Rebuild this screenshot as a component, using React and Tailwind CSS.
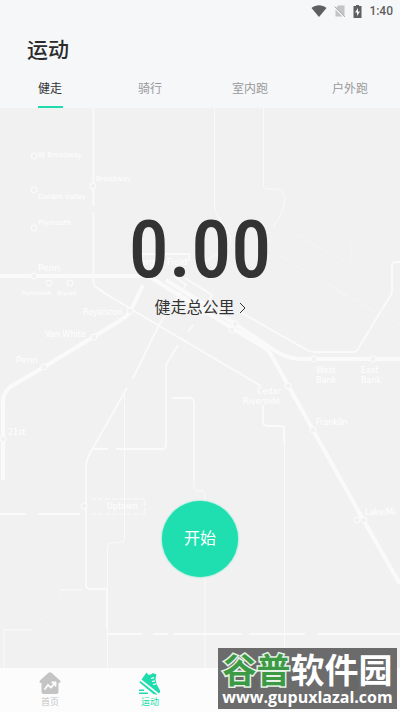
import { useState } from 'react'

const TABS = ['健走', '骑行', '室内跑', '户外跑']

export default function App() {
  const [tab, setTab] = useState(0)

  return (
    <div className="relative min-h-screen flex flex-col bg-[#f1f1f1] text-[#333333] font-['Roboto','Noto_Sans_CJK_SC',sans-serif]">
      <header className="bg-[#f6f7f9]">
        <StatusBar />
        <h1 className="px-[27px] pt-3 text-[21px] leading-8 font-medium text-[#2b2b2b]">运动</h1>

        {/* ── Tabs ── */}
        <nav className="grid grid-cols-4 mt-2">
          {TABS.map((label, i) => (
            <button
              key={label}
              onClick={() => setTab(i)}
              className={`h-[34px] flex flex-col items-center justify-between pt-[5px] text-[12px] leading-5 ${
                i === tab ? 'text-[#333333]' : 'text-[#999999]'
              }`}
            >
              {label}
              {i === tab && <span className="w-[25px] h-[2px] bg-[#1fdcae]" />}
            </button>
          ))}
        </nav>
      </header>

      {/* ── Distance + start ── */}
      <main className="relative flex-1 flex flex-col items-center pt-[98px] pb-[91px]">
        <MapBackground />
        <p className="relative text-[80px] leading-[88px] font-medium font-['Roboto_Condensed','Roboto',sans-serif]">0.00</p>
        <a href="#total" className="relative mt-0.5 flex items-center gap-1 text-[16px] leading-6">
          健走总公里
          <svg className="w-[7px] h-3" viewBox="0 0 7 12" fill="none" stroke="currentColor">
            <path d="M1 1l5 5-5 5" />
          </svg>
        </a>
        <button className="relative mt-auto w-[76px] h-[76px] rounded-full bg-[#1fdfb0] text-white text-[16px] shadow-[0_0_2px_#1fdfb0]">
          开始
        </button>
      </main>

      <BottomNav />
      <Watermark />
    </div>
  )
}

function StatusBar() {
  return (
    <div className="h-[22px] flex items-center justify-end gap-[7px] pr-[7px] text-[#5f5f5f]">
      <svg className="w-4 h-3" viewBox="0 0 16 12" fill="currentColor">
        <path d="M.5 3C5-.7 11-.7 15.500 3L8 12z" />
      </svg>
      <svg className="w-3 h-3" viewBox="0 0 12 12">
        <path d="M4 .5h6.500v11L2 3z" fill="#c4c4c4" />
        <path d="M1.500 4.500v7h7z" fill="#c4c4c4" />
        <path d="M.5 1.500l10.500 10.500" stroke="#b0b0b0" fill="none" />
      </svg>
      <svg className="w-[9px] h-[13px]" viewBox="0 0 9 13">
        <path d="M3 0h3v1h2.500v12h-8V1H3z" fill="currentColor" />
        <path d="M5 3L2 7.500h2V11l3-4.500H5z" fill="#f6f7f9" />
      </svg>
      <span className="text-[12px] leading-4 font-medium">1:40</span>
    </div>
  )
}

const STATIONS = [
  [34, 156], [34, 190], [34, 228], [93, 186], [34, 276], [49, 283], [70, 283],
  [130, 311], [94, 337], [44, 367], [3, 439], [84, 506], [235, 324], [232, 330],
  [314, 359], [373, 359], [288, 386], [313, 430], [357, 520], [364, 520],
]

const PLACES = [
  [38, 157, 'W Broadway', 7], [96, 181, 'Broadway', 7], [38, 199, 'Golden Valley', 7],
  [38, 225, 'Plymouth', 7], [38, 271, 'Penn', 9], [22, 295, 'Humboldt', 6], [57, 295, 'Bryant', 6],
  [136, 265, 'Target Field', 9], [83, 315, 'Royalston', 8], [45, 337, 'Van White', 8],
  [16, 363, 'Penn', 9], [8, 435, '21st', 8], [107, 509, 'Uptown', 8],
  [316, 373, 'West', 8], [316, 383, 'Bank', 8], [361, 373, 'East', 8], [361, 383, 'Bank', 8],
  [257, 394, 'Cedar', 8], [243, 404, 'Riverside', 8], [316, 425, 'Franklin', 8],
  [365, 515, 'Lake/Mi', 8],
]

function MapBackground() {
  return (
    <svg
      className="absolute inset-0 w-full h-full"
      viewBox="0 108 400 560"
      preserveAspectRatio="xMidYMid slice"
      fill="none"
      stroke="#fafafa"
      aria-hidden="true"
    >
      {/* thin streets */}
      <g strokeWidth="1">
        <path d="M214.500 108v98q0 6 4 11l12 20q2 6-4 12l-28 16" />
        <path d="M263.500 108v77q0 4 4 4h8q9 0 9 12 0 9-11 26" />
        <path d="M282 227l62 34M350 262l1-18M271 251l76 44M338 291l62 34" strokeDasharray="3 2" strokeWidth=".6" />
        <path d="M124.500 395v144q0 3-3 3l-10 1q-4 0-4 4v121" />
        <path d="M194 480v8q0 3 4 3h4q3 0 3 4v173M284.500 426v242M4 668v-38h27M60 590h22" />
        <path d="M31 630l28-26 2-14" strokeDasharray="3 3" strokeWidth=".6" />
        <path d="M91 499h54v15M91 514h54" strokeDasharray="5 2" />
      </g>
      <g strokeWidth="1.800">
        <path d="M93.500 108v98M93.500 212v70q0 4 4 6l15 10M99 290l101 60 61 36M263 405v16q0 5 5 5h12q4 0 4 4v12" />
        <path d="M166 315l-6 8-27 55M127 388l-38 67q-3 6-3 14v116q0 4 5 4h16v40" />
        <path d="M178 345l-12 20v80q0 4-4 4h-46M193 325l-5 7M93 449h15M172 398h17q5 0 5 5v78" />
        <path d="M0 514h26M38 514h42M107 634h35M153 634h15M173 634h69M249 634h56M317 634h83" />
        <path d="M240 312l67 38q3 2 8 2h38q4 0 5-3l34-56v-27q0-4 5-4h3" />
        <path d="M141 261v-7h48v7" />
      </g>

      {/* rail lines */}
      <g strokeWidth="4">
        <path d="M0 276h144q5 0 9 3l84 52 28 17q5 4 9 12l20 36 19 34 47 84 40 70" />
        <path d="M166 280l69 44 33 22q17 13 32 13h100" />
        <path d="M143 285l-12 25q-3 6-10 10l-77 47-34 20q-8 7-7 17v76" />
      </g>
      <path d="M174 276l12 9-12 18M185 278l27 17-10 20" strokeWidth="2" />

      <g fill="#f1f1f1" strokeWidth="1.200">
        {STATIONS.map(([x, y]) => (
          <circle key={`${x}-${y}`} cx={x} cy={y} r="2.800" />
        ))}
      </g>
      <g fill="#ffffff" stroke="none" className="font-['DejaVu_Sans',sans-serif]">
        {PLACES.map(([x, y, name, size]) => (
          <text key={`${x}-${y}`} x={x} y={y} fontSize={size}>{name}</text>
        ))}
      </g>
    </svg>
  )
}

function BottomNav() {
  return (
    <nav className="grid grid-cols-4 h-11 bg-[#fcfcfc] text-[9px] leading-3 text-[#c4c4c4]">
      <a href="#home" className="flex flex-col items-center pt-1">
        <svg className="w-[22px] h-6" viewBox="0 0 22 24">
          <path d="M9.500.8q1.500-1.300 3 0l8.500 7.700q1.500 2.500-1.500 2.500V20q0 2-2 2h-13q-2 0-2-2v-9q-3 0-1.500-2.500z" fill="#c4c4c4" />
          <path d="M5.500 17.500l3.500-4.500 3 2.500 4-4.500M12.500 10.500h4v4" fill="none" stroke="#fcfcfc" strokeWidth="1.800" />
        </svg>
        首页
      </a>
      <a href="#sport" className="flex flex-col items-center pt-1 text-[#1fdcae]">
        <svg className="w-[22px] h-6" viewBox="0 0 22 24" fill="currentColor">
          <path d="M2.500 7.500L7.500.5l1.500 2q2.500 1 5-1.500l3.500 1.500-1 4.500 1 5 3.500 6.500q.5 2-1 3z" />
          <path d="M1.300 9l17 13.300q-2.500.7-4.500-.8L.5 10.500z" />
          <path d="M0 17.500h5V19H0zM0 20.500h9V22H0z" />
          <path d="M12 6.500l3-.8M13 9.500l3-.6M14 12.500l3-.6" stroke="#fcfcfc" strokeWidth="1.200" />
        </svg>
        运动
      </a>
      <a href="#discover" aria-label="发现" className="flex flex-col items-center pt-1">
        <svg className="w-[22px] h-6" viewBox="0 0 22 24"><circle cx="11" cy="12" r="9" fill="#c4c4c4" /></svg>
      </a>
      <a href="#mine" aria-label="我的" className="flex flex-col items-center pt-1">
        <svg className="w-[22px] h-6" viewBox="0 0 22 24"><circle cx="11" cy="12" r="9" fill="#c4c4c4" /></svg>
      </a>
    </nav>
  )
}

function Watermark() {
  return (
    <div className="absolute right-[3px] bottom-[3px] w-[179px] h-[61px] pt-[3px] flex flex-col items-center bg-[#5f5f5f]/92 text-white whitespace-nowrap">
      <p className="text-[34px] leading-9 font-bold font-['Noto_Sans_CJK_SC',sans-serif]">
        <span className="text-[#3c9a45] [-webkit-text-stroke:3px_#e6f2e6] [paint-order:stroke_fill]">谷普</span>软件园
      </p>
      <p className="text-[16px] leading-5 font-bold font-['Open_Sans',sans-serif]">www.gupuxlazal.com</p>
    </div>
  )
}
